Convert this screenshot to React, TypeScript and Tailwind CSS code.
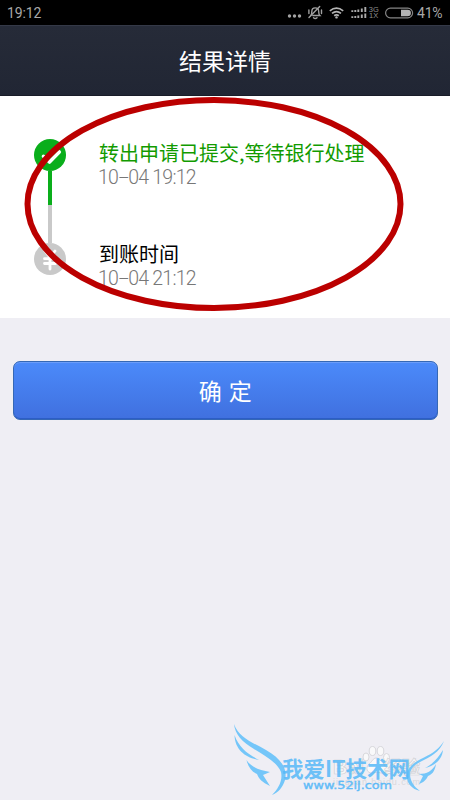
import type { ReactNode } from 'react';

function StatusIcons() {
  return (
    <svg width="129" height="20" viewBox="285 3 129 20" className="shrink-0" fill="none">
      <g fill="#a3a3a3">
        <circle cx="289.500" cy="16" r="1.700" />
        <circle cx="294.500" cy="16" r="1.700" />
        <circle cx="299.500" cy="16" r="1.700" />
      </g>
      {/* muted bell */}
      <g stroke="#a0a0a0" strokeWidth="1.400" strokeLinecap="round">
        <path d="M310.800 15.500c1-1 1-2.200 1-4 0-2.200 1.300-3.600 3.400-3.600s3.500 1.400 3.500 3.600c0 1.800.1 3 1.100 4h-7M313.500 17.700c1 1 2.500 1 3.500 0" />
        <path d="M309 17.500L319.700 6.500M308.900 10v3.500M321.500 10v3.500" />
      </g>
      <g stroke="#b4b4b4" strokeWidth="1.700">
        <path d="M329.800 10.800q6.700-5.400 13.400 0M332 13.300q4.500-3.500 9 0M334.200 15.800q2.300-1.700 4.600 0" />
      </g>
      <circle cx="336.500" cy="17.400" r="1.200" fill="#b4b4b4" />
      <g stroke="#ababab" strokeWidth="1.900">
        <path d="M352.300 10.300V12M355.300 10V12M358.300 9.500V12M361.800 8.500V12M365.300 7V12" />
        <path d="M352.300 16.300V18M355.300 16V18M358.300 15.500V18M361.800 14.500V18M365.300 13.500V18" />
      </g>
      <g fill="#8d8d8d" fontFamily="'Liberation Sans', sans-serif" fontSize="7.500">
        <text x="368.800" y="12.200">3G</text>
        <text x="369" y="18.400">1X</text>
      </g>
      <rect x="385.600" y="8.200" width="27" height="9.600" rx="4.800" stroke="#858585" strokeWidth="1.200" />
      <path d="M401 9.700h6.600a3.300 3.300 0 0 1 0 6.600H401z" fill="#b4b4b4" />
    </svg>
  );
}

function CheckBadge() {
  return (
    <svg width="32" height="32" viewBox="0 0 32 32">
      <circle cx="16" cy="16" r="16" fill="#0aae1b" />
      <path d="M9.500 17.300L15.500 23L25.300 13" fill="none" stroke="#fff" strokeWidth="3.600" strokeLinecap="round" strokeLinejoin="round" />
    </svg>
  );
}

function YuanBadge() {
  return (
    <svg width="32" height="32" viewBox="0 0 32 32">
      <circle cx="16" cy="16" r="16" fill="#c9c9c9" />
      <path d="M11 8L16 14.500L21 8M16 14.500V26M10.500 15.700H21.500M10.500 20.500H21.500" fill="none" stroke="#fff" strokeWidth="2.800" strokeLinecap="round" />
    </svg>
  );
}

interface StepProps {
  title: ReactNode;
  time: string;
  className: string;
}

function Step({ title, time, className }: StepProps) {
  const [date, hour] = time.split(' ');
  const [month, day] = date.split('-');
  return (
    <div className="h-[101px]">
      <div className={`text-[20px] leading-[28px] whitespace-nowrap ${className}`}>{title}</div>
      <div className="-ml-px font-['Roboto'] font-light text-[19.5px] leading-[22px] tracking-[-0.75px] text-[#777777] whitespace-nowrap">
        {month}
        <span className="inline-block w-[10px] text-center scale-x-[1.9]">-</span>
        {day} {hour}
      </div>
    </div>
  );
}

function Watermark() {
  return (
    <svg width="225" height="85" viewBox="0 0 225 85" className="absolute left-[225px] top-[715px]">
      {/* pale mark behind */}
      <g fill="#f9f9fa" stroke="#d4d4d8" strokeWidth="0.900">
        <ellipse cx="141" cy="42" rx="3" ry="4" />
        <ellipse cx="147.500" cy="36" rx="3.300" ry="4.500" />
        <ellipse cx="155.500" cy="36" rx="3.300" ry="4.500" />
        <ellipse cx="161.500" cy="42.500" rx="3" ry="4" />
        <path d="M151 43c-3 0-4 4-7 6-4 4-2 9 3 9 4-1 6-1 9 0 5 1 8-4 4-8-4-3-5-7-9-7z" />
      </g>
      <g fontFamily="'Liberation Sans', 'Noto Sans CJK SC', sans-serif" fill="#f6f6f8" stroke="#d0d0d4" strokeWidth="0.700">
        <text x="108" y="59" fontSize="20" fontWeight="700" textLength="31">Bai</text>
        <text x="159" y="59" fontSize="18" fontWeight="700" textLength="36">经验</text>
        <text x="108" y="70" fontSize="9" textLength="87" stroke="none" fill="#d8d8dc">jingyan.baidu.com</text>
      </g>
      <g fill="#74c6f9">
        <path d="M9 9C14 23 27 27 41 35C55 43 63 53 60 65C58 72 53 78 47 80C53 74 58 66 56 57C52 47 40 41 29 34C17 27 10 19 9 9Z" />
        <path d="M9.500 20C14 33 23 39 34 45C22 43 10 36 9.500 20Z" />
        <path d="M21.500 45C26 52 34 55 45 57L38 60L45 71C37 67 34 64 32 59C27 57 23 52 21.500 45Z" />
        <path d="M219 26C215 37 205 42 196 46.500C187 51 184 56 185.500 63C187 69 191 73 195 76C186 74 181 67 182 60C183 51 190 47 199 42.500C208 38 214 34 219 26Z" />
        <path d="M218 35C217 46 207 52 200 53C208 49 213 43 218 35Z" />
        <path d="M211 49C210 57 206 60 203 61C201 65 199 67 194 69L198 61L194 59C202 59 207 56 211 49Z" />
      </g>
      <g fill="#55b8f8" fillOpacity="0.85">
        <text x="57" y="61.500" fontFamily="'Noto Sans CJK SC', sans-serif" fontSize="22" fontWeight="700" textLength="128" lengthAdjust="spacingAndGlyphs">我爱IT技术网</text>
        <text x="78" y="74" fontFamily="'DejaVu Sans', sans-serif" fontSize="11" stroke="#55b8f8" strokeWidth="0.400" textLength="89" lengthAdjust="spacingAndGlyphs">www.52ij.com</text>
      </g>
    </svg>
  );
}

export default function App() {
  return (
    <div className="relative flex h-[800px] w-[450px] flex-col overflow-hidden bg-[#efeef4] font-['Noto_Sans_CJK_SC',sans-serif]">
      <div className="flex h-[25px] shrink-0 items-center justify-between bg-black px-[7px] pt-px font-['Roboto'] text-[14px] text-[#a8a8a8]">
        <span className="tracking-[-0.1px]">19:12</span>
        <div className="flex items-center gap-[3px]">
          <StatusIcons />
          <span className="w-[26px] tracking-[-0.2px]">41%</span>
        </div>
      </div>

      <header className="flex h-[71px] shrink-0 items-center justify-center border-t border-b border-t-[#343947] border-b-[#191c28] bg-linear-to-b from-[#262b38] to-[#212634]">
        <h1 className="text-[23px] leading-none text-white">结果详情</h1>
      </header>

      <section className="flex h-[222px] shrink-0 bg-white pl-[34px] pt-[43px]">
        <div className="flex w-[32px] flex-col items-center">
          <CheckBadge />
          <div className="h-[34px] w-[4px] bg-[#0aae1b]" />
          <div className="h-[38px] w-[4px] bg-[#c9c9c9]" />
          <YuanBadge />
        </div>
        <div className="ml-[33px]">
          <Step title="转出申请已提交,等待银行处理" time="10-04 19:12" className="text-[#129b00]" />
          <Step title="到账时间" time="10-04 21:12" className="text-black" />
        </div>
      </section>

      <button className="ml-[12.5px] mr-[12px] mt-[43px] h-[59px] shrink-0 rounded-[7px] border border-[#3568b5] bg-linear-to-b from-[#4b8afa] to-[#4070df] text-[23px] leading-none text-white [word-spacing:2px] shadow-[inset_0_1px_0_#6b9dfa,inset_0_-1px_0_#2c5dc6]">
        确 定
      </button>

      <Watermark />

      {/* hand-drawn highlight over the steps */}
      <svg width="450" height="320" className="pointer-events-none absolute left-0 top-0">
        <ellipse cx="214" cy="204" rx="186.500" ry="104" fill="none" stroke="#bb0000" strokeWidth="6" />
      </svg>
    </div>
  );
}
